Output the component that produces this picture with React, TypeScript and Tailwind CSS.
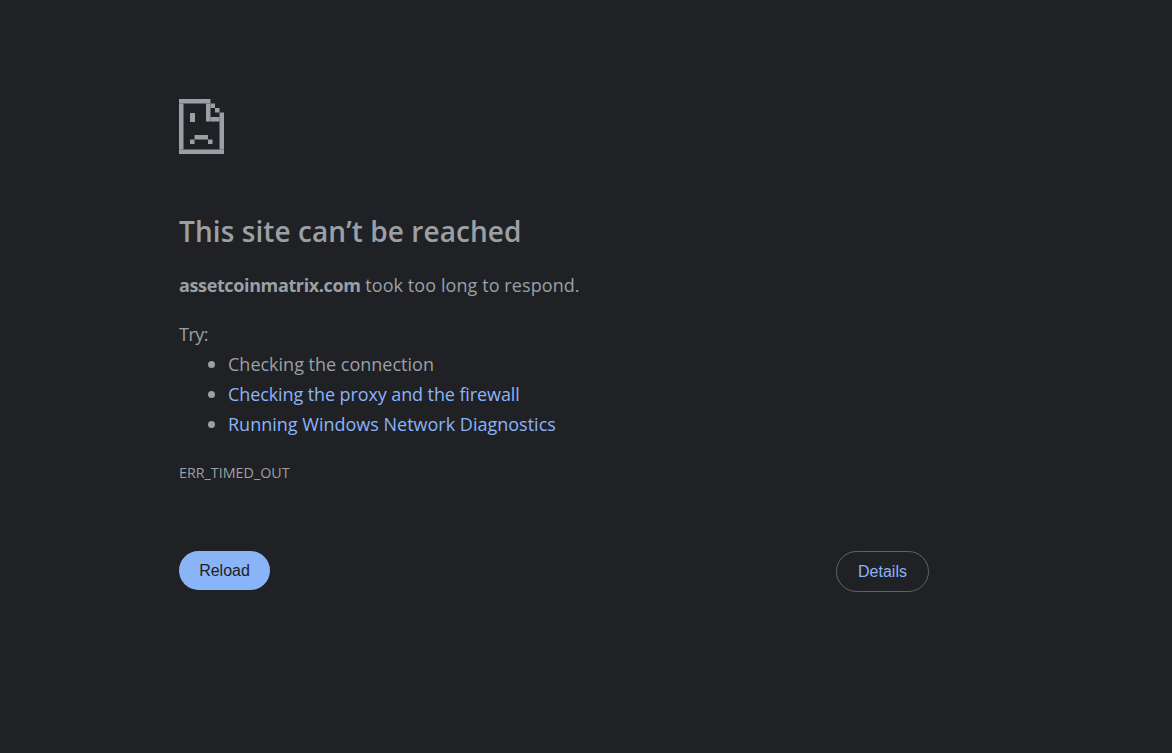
const cells: [number, number, number, number][] = [
  [0, 0, 31.5, 4.5],
  [0, 4.5, 4.5, 46],
  [0, 50.5, 45, 4.5],
  [40.5, 13.5, 4.5, 37],
  [27, 4.5, 4.5, 18],
  [31.5, 18, 9, 4.5],
  [31.5, 4.5, 4.5, 4.5],
  [36, 9, 4.5, 4.5],
  [11, 14, 5, 9],
  [15.5, 36, 13.5, 4.5],
  [11, 40.5, 4.5, 4.5],
  [29, 40.5, 4.5, 4.5],
];

function SadPage() {
  return (
    <svg width="45" height="55" viewBox="0 0 45 55" fill="#9aa0a6" className="block">
      {cells.map(([x, y, w, h], i) => (
        <rect key={i} x={x} y={y} width={w} height={h} />
      ))}
    </svg>
  );
}

function Item({ children, link }: { children: string; link?: boolean }) {
  return (
    <li className="flex items-center">
      <span className="mr-[13px] h-[7px] w-[7px] rounded-full bg-[#9aa0a6]" />
      <span className={link ? "text-[#8ab4f8]" : ""}>{children}</span>
    </li>
  );
}

export default function App() {
  return (
    <div className="min-h-[753px] bg-[#202124] pt-[99px] pl-[179px] text-[#9aa0a6] font-['Open_Sans','Noto_Sans',sans-serif]">
      <div className="w-[750px]">
        <SadPage />
        <h1 className="mt-[59px] text-[28px] leading-[36px] font-semibold tracking-[0.08px]">This site can’t be reached</h1>
        <p className="mt-[21px] text-[18px] leading-[30px]">
          <strong className="font-bold tracking-[-0.37px]">assetcoinmatrix.com</strong> <span className="tracking-[0.08px]">took too long to respond.</span>
        </p>
        <p className="mt-[19px] text-[18px] leading-[30px] tracking-[-0.5px]">Try:</p>
        <ul className="pl-[29px] text-[18px] leading-[30px]">
          <Item>Checking the connection</Item>
          <li className="flex items-center tracking-[-0.1px]">
            <span className="mr-[13px] h-[7px] w-[7px] rounded-full bg-[#9aa0a6]" />
            <span className="text-[#8ab4f8]">Checking the proxy and the firewall</span>
          </li>
          <Item link>Running Windows Network Diagnostics</Item>
        </ul>
        <div className="mt-[24px] text-[14.3px] leading-[20px]">ERR_TIMED_OUT</div>
        <div className="mt-[68px] flex items-start justify-between">
          <button className="h-[39px] w-[91px] rounded-[20px] bg-[#8ab4f8] text-[16px] text-[#202124] font-['Liberation_Sans',sans-serif]">Reload</button>
          <button className="h-[41px] w-[93px] rounded-[21px] border border-[#5f6368] text-[16px] text-[#8ab4f8] font-['Liberation_Sans',sans-serif]">Details</button>
        </div>
      </div>
    </div>
  );
}
